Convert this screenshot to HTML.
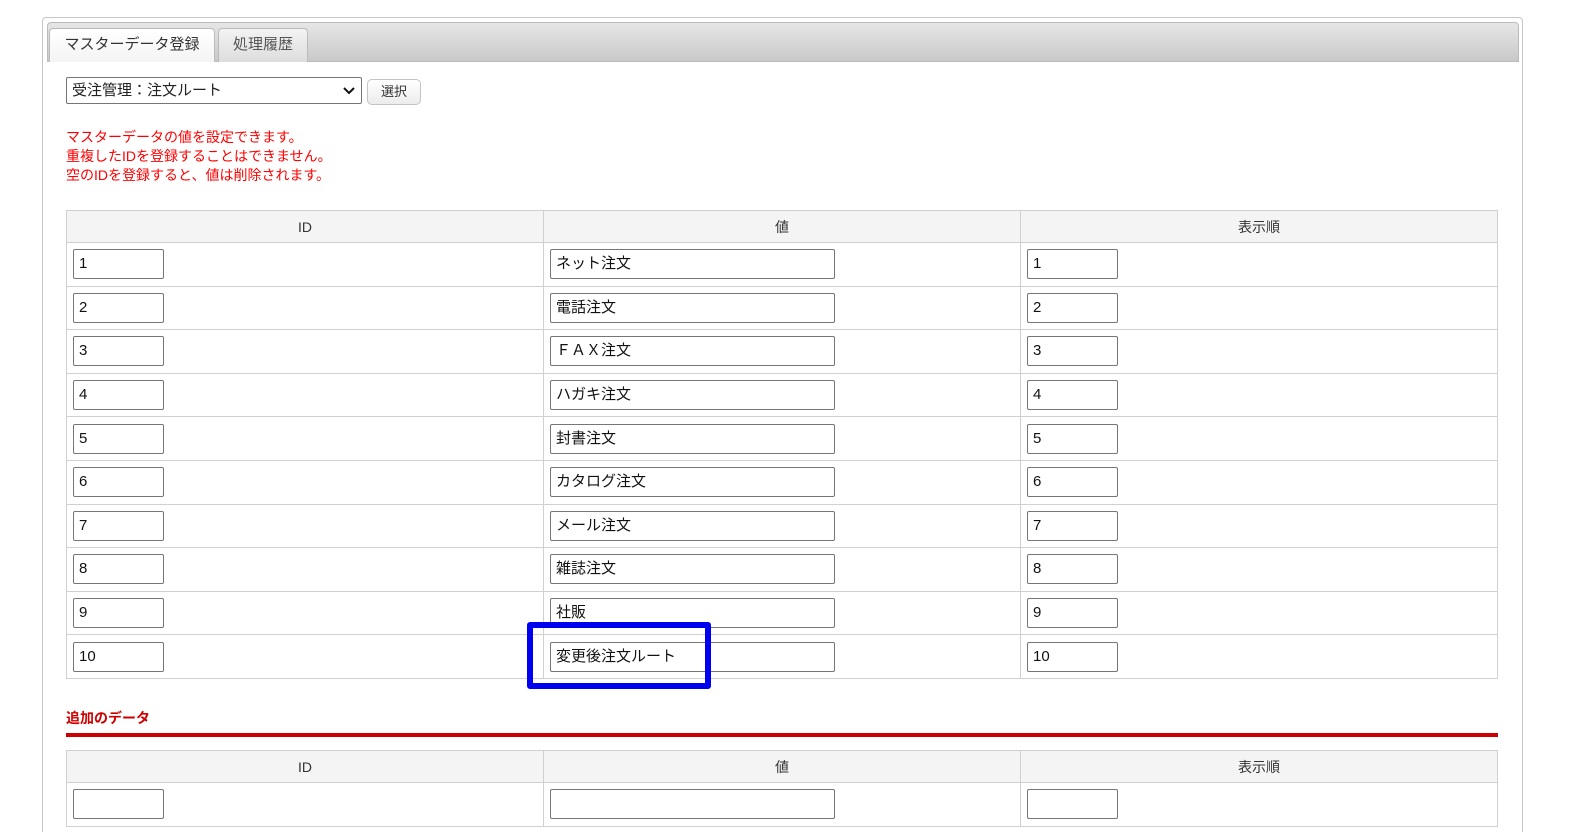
<!DOCTYPE html>
<html><head><meta charset="utf-8"><style>
*{box-sizing:border-box}
html,body{margin:0;width:1587px;height:832px;overflow:hidden}
body{background:#fff;font-family:"Liberation Sans","Noto Sans CJK JP",sans-serif;font-size:14px;color:#222;position:relative}
.wrap{position:absolute;left:42px;top:17px;width:1481px;height:815px;border:1px solid #c6c6c6;border-bottom:none;border-radius:4px 4px 0 0}
.tabbar{position:absolute;left:47px;top:22px;width:1472px;height:40px;border:1px solid #bbb;border-radius:4px 4px 0 0;background:linear-gradient(#e6e6e6,#c9c9c9)}
.tab{position:absolute;top:28px;height:34px;border:1px solid #bbb;border-bottom:none;border-radius:4px 4px 0 0;text-align:center;line-height:32px;font-size:15px;color:#333}
.t1{left:49px;width:166px;background:linear-gradient(#fff,#f4f4f4)}
.t2{left:218px;width:90px;background:linear-gradient(#f3f3f3,#ddd);color:#555}
.sel{position:absolute;left:66px;top:77px;width:296px;height:27px;border:1px solid #767676;border-radius:2px;padding:2px 5px;font-size:15px;line-height:21px}
.btn{position:absolute;left:367px;top:79px;width:54px;height:26px;border:1px solid #c4c4c4;border-radius:5px;background:linear-gradient(#fff,#ececec);text-align:center;line-height:23px;font-size:13px;color:#333}
.red{position:absolute;left:66px;top:128px;color:#f00;font-size:14px;line-height:19px}
table{position:absolute;left:66px;border-collapse:collapse;width:1432px;table-layout:fixed}
td,th{border:1px solid #d0d0d0;padding:0 6px;text-align:left}
th{background:#f3f4f3;font-weight:normal;height:32px;text-align:center;font-size:14px;color:#333}
td{height:43.6px}
.c1,.c2{width:477px}
.in{display:block;height:30px;border:1px solid #767676;border-radius:2px;padding:0 5px;line-height:28px;font-size:15px;color:#111}
.s{width:91px}.l{width:285px}
.h2{position:absolute;left:66px;top:708px;color:#c00;font-weight:bold;font-size:14px}
.line{position:absolute;left:66px;top:733px;width:1432px;height:4px;background:#c00}
.blue{position:absolute;left:527px;top:622px;width:184px;height:67px;border:6px solid #0000f0;border-radius:3px}
</style></head><body>
<div class="wrap"></div>
<div class="tabbar"></div>
<div class="tab t1">マスターデータ登録</div>
<div class="tab t2">処理履歴</div>
<div class="sel">受注管理：注文ルート<svg style="position:absolute;right:6px;top:9px" width="12" height="8"><path d="M1 1L6 6L11 1" stroke="#111" stroke-width="2" fill="none"/></svg></div>
<div class="btn">選択</div>
<div class="red">マスターデータの値を設定できます。<br>重複したIDを登録することはできません。<br>空のIDを登録すると、値は削除されます。</div>
<table style="top:210px">
<tr><th class="c1">ID</th><th class="c2">値</th><th>表示順</th></tr>
<tr><td><span class="in s">1</span></td><td><span class="in l">ネット注文</span></td><td><span class="in s">1</span></td></tr>
<tr><td><span class="in s">2</span></td><td><span class="in l">電話注文</span></td><td><span class="in s">2</span></td></tr>
<tr><td><span class="in s">3</span></td><td><span class="in l">ＦＡＸ注文</span></td><td><span class="in s">3</span></td></tr>
<tr><td><span class="in s">4</span></td><td><span class="in l">ハガキ注文</span></td><td><span class="in s">4</span></td></tr>
<tr><td><span class="in s">5</span></td><td><span class="in l">封書注文</span></td><td><span class="in s">5</span></td></tr>
<tr><td><span class="in s">6</span></td><td><span class="in l">カタログ注文</span></td><td><span class="in s">6</span></td></tr>
<tr><td><span class="in s">7</span></td><td><span class="in l">メール注文</span></td><td><span class="in s">7</span></td></tr>
<tr><td><span class="in s">8</span></td><td><span class="in l">雑誌注文</span></td><td><span class="in s">8</span></td></tr>
<tr><td><span class="in s">9</span></td><td><span class="in l">社販</span></td><td><span class="in s">9</span></td></tr>
<tr><td><span class="in s">10</span></td><td><span class="in l">変更後注文ルート</span></td><td><span class="in s">10</span></td></tr>
</table>
<div class="blue"></div>
<div class="h2">追加のデータ</div>
<div class="line"></div>
<table style="top:750px">
<tr><th class="c1">ID</th><th class="c2">値</th><th>表示順</th></tr>
<tr><td><span class="in s"></span></td><td><span class="in l"></span></td><td><span class="in s"></span></td></tr>
</table>
</body></html>
